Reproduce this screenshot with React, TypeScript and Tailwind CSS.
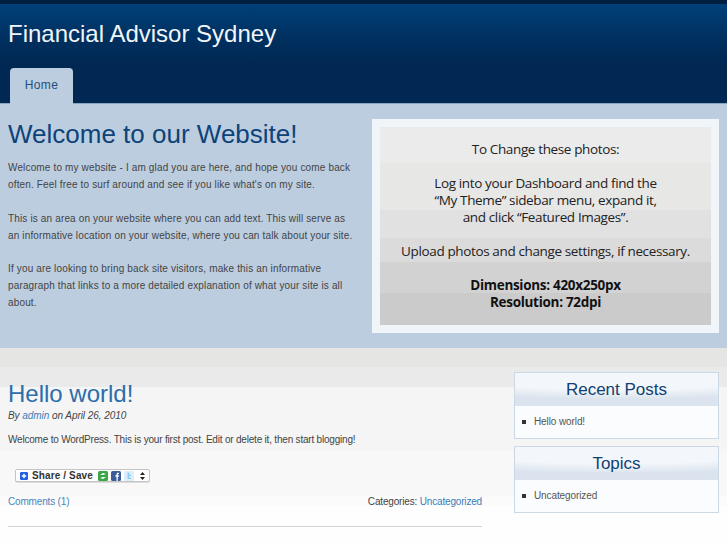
import type { ReactNode } from "react";

const sans = "font-['Liberation_Sans',Arial,sans-serif]";

function Widget({ title, item }: { title: string; item: string }) {
  return (
    <div className="h-[67px] w-[205px] border border-[#cbd8e6] bg-[#fbfcfd]">
      <h3 className="h-[33px] bg-[radial-gradient(ellipse_130%_26px_at_50%_0%,#f3f6fb_65%,#dbe4ee_100%)] text-center text-[17px] leading-[33px] text-[#0f3f73]">
        {title}
      </h3>
      <ul className="pl-[7px] pt-[10px] text-[10px] leading-[12px] tracking-[-0.1px] text-[#555]">
        <li className="flex items-center">
          <span className="mr-[8px] h-[4px] w-[4px] bg-[#333]" />
          {item}
        </li>
      </ul>
    </div>
  );
}

function Para({ children }: { children: ReactNode }) {
  return <p className="mb-[16.5px] text-[10px] leading-[17px] tracking-[0.15px] text-[#444]">{children}</p>;
}

function ShareButton() {
  return (
    <div className="ml-[7px] flex h-[13px] w-[135px] items-center rounded-[2px] border border-[#c4c4c4] bg-white pl-[4px] shadow-[0_1px_0_#ddd]">
      <svg width="8" height="8" viewBox="0 0 9 9" className="mr-[4px]">
        <rect width="9" height="9" rx="1.5" fill="#1f5fe0" />
        <path d="M4.5 2v5M2 4.500h5" stroke="#fff" strokeWidth="1.6" />
      </svg>
      <span className="text-[10px] font-bold leading-none tracking-[0.12px] text-[#333]">Share / Save</span>
      <svg width="10" height="10" viewBox="0 0 10 10" className="ml-[5px]">
        <rect width="10" height="10" rx="1.5" fill="#3aa648" />
        <path d="M2 4l3-2 3 1-3 1zM8 6L5 8 2 7l3-1z" fill="#fff" />
      </svg>
      <svg width="10" height="10" viewBox="0 0 10 10" className="ml-[3px]">
        <rect width="10" height="10" rx="1.5" fill="#3b5b9a" />
        <path d="M5.500 10V5.800H4.400V4.300h1.100V3.300C5.500 2.200 6.200 1.700 7.100 1.700h.9v1.400h-.6c-.4 0-.6.200-.6.600v.6H8L7.800 5.800H6.800V10z" fill="#fff" />
      </svg>
      <svg width="10" height="10" viewBox="0 0 10 10" className="ml-[3px]">
        <rect width="10" height="10" rx="1.500" fill="#dbeefa" />
        <path d="M3.500 1.500v5c0 1 .7 1.500 1.500 1.500h2V6.700H5.200V5H7V3.700H5.200V1.500z" fill="#8ccdf0" />
      </svg>
      <svg width="5" height="8" viewBox="0 0 5 8" className="ml-[6px]">
        <path d="M2.500 0L5 3H0zM2.500 8L0 5h5z" fill="#222" />
      </svg>
    </div>
  );
}

export default function App() {
  return (
    <div className={`h-[545px] w-[727px] overflow-hidden ${sans}`}>
      <header className="h-[104px] border-t-[4px] border-b border-t-[#001f40] border-b-[#8aa3bf] bg-[linear-gradient(#004079_0%,#00305f_35%,#002853_60%,#002853_100%)]">
        <h1 className="pl-[8px] pt-[15px] text-[24px] leading-[30px] text-[#f2f6fa]">Financial Advisor Sydney</h1>
        <nav className="pl-[10px] pt-[19px]">
          <a className="block h-[36px] w-[63px] rounded-t-[4px] bg-[#bccde0] text-center text-[12px] leading-[34px] tracking-[0.4px] text-[#234f7e]">
            Home
          </a>
        </nav>
      </header>

      <section className="flex h-[244px] bg-[#bccde0]">
        <div className="w-[372px] pl-[8px] pr-[14px]">
          <h2 className="pt-[13px] text-[26px] leading-[34px] text-[#0d4378]">Welcome to our Website!</h2>
          <div className="pt-[8px]">
            <Para>Welcome to my website - I am glad you are here, and hope you come back often. Feel free to surf around and see if you like what's on my site.</Para>
            <Para>This is an area on your website where you can add text. This will serve as an informative location on your website, where you can talk about your site.</Para>
            <Para>If you are looking to bring back site visitors, make this an informative paragraph that links to a more detailed explanation of what your site is all about.</Para>
          </div>
        </div>
        <div className="mt-[15px] h-[214px] w-[347px] border-[8px] border-[#f0f5fa]">
          <div className="h-full bg-[linear-gradient(#ebebeb_0%,#ebebeb_18%,#e7e7e6_18%,#e7e7e6_42%,#e1e1e1_42%,#e1e1e1_56%,#dbdbdb_56%,#dbdbdb_68%,#d2d2d2_68%,#d2d2d2_84%,#cbcbcb_84%,#cbcbcb_100%)] pt-[14px] text-center font-['Open_Sans',sans-serif] text-[13.5px] leading-[17px] tracking-[-0.37px] text-[#222]">
            <p>To Change these photos:</p>
            <p className="mt-[17px]">Log into your Dashboard and find the</p>
            <p>“My Theme” sidebar menu, expand it,</p>
            <p>and click “Featured Images”.</p>
            <p className="mt-[17px]">Upload photos and change settings, if necessary.</p>
            <p className="mt-[17px] font-bold tracking-[-0.3px] text-[#111]">Dimensions: 420x250px</p>
            <p className="font-bold tracking-[-0.3px] text-[#111]">Resolution: 72dpi</p>
          </div>
        </div>
      </section>

      <main className="flex h-[197px] bg-[linear-gradient(#e5e5e4_0px,#e5e5e4_19px,#eaeaea_19px,#eaeaea_39px,#f5f5f5_39px,#f5f5f5_103px,#f9f8f8_103px,#f9f8f8_148px,#fbfbfb_148px,#fbfbfb_158px,#fefefe_158px)]">
        <article className="ml-[8px] w-[474px] pt-[31px]">
          <h2 className="text-[24px] leading-[30px] text-[#2b6eaa]">Hello world!</h2>
          <p className="pt-[1px] text-[10px] italic leading-[12px] tracking-[-0.06px] text-[#444]">
            By <a className="text-[#3d7cb8]">admin</a> on April 26, 2010
          </p>
          <p className="pt-[12px] text-[10px] leading-[12px] tracking-[-0.2px] text-[#444]">
            Welcome to WordPress. This is your first post. Edit or delete it, then start blogging!
          </p>
          <div className="pt-[23px]">
            <ShareButton />
          </div>
          <div className="flex justify-between pt-[14px] text-[10px] leading-[12px] tracking-[-0.17px] text-[#444]">
            <a className="text-[#4a86bd]">Comments (1)</a>
            <span>
              Categories: <a className="text-[#3d7cb8]">Uncategorized</a>
            </span>
          </div>
          <hr className="mt-[18px] border-t-[1px] border-[#d8d4d0]" />
        </article>
        <aside className="ml-[32px] flex flex-col gap-[7px] pt-[24px]">
          <Widget title="Recent Posts" item="Hello world!" />
          <Widget title="Topics" item="Uncategorized" />
        </aside>
      </main>
    </div>
  );
}
